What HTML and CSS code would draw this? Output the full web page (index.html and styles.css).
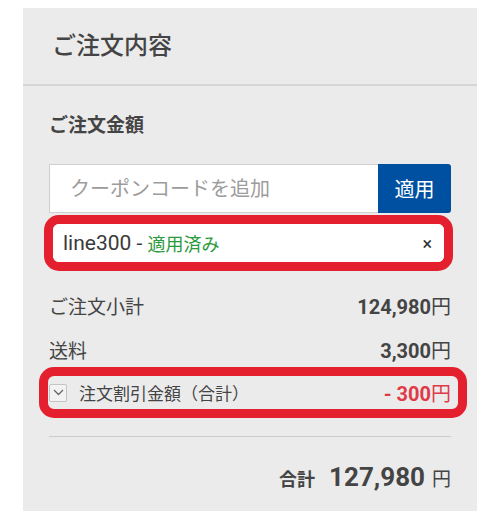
FILE: index.html
```html
<!DOCTYPE html>
<html lang="ja">
<head>
<meta charset="utf-8">
<link rel="stylesheet" href="styles.css">
</head>
<body>
<div class="panel">
  <div class="panel-head">ご注文内容</div>
  <div class="panel-body">
    <div class="section-title">ご注文金額</div>
    <div class="coupon-form">
      <input class="coupon-input" type="text" placeholder="クーポンコードを追加">
      <button class="coupon-btn" type="button">適用</button>
    </div>
    <div class="mark mark-chip">
      <div class="chip">
        <span class="chip-code">line300 - </span><span class="chip-status">適用済み</span>
        <span class="chip-close">×</span>
      </div>
    </div>
    <div class="rows">
      <div class="row">
        <span class="row-label">ご注文小計</span>
        <span class="amount">124,980<span class="yen">円</span></span>
      </div>
      <div class="row">
        <span class="row-label">送料</span>
        <span class="amount">3,300<span class="yen">円</span></span>
      </div>
      <div class="mark mark-row">
        <div class="row row-discount">
          <span class="row-left">
            <span class="check"><svg width="11" height="7" viewBox="0 0 11 7"><path d="M1 1l4.5 4.5L10 1" fill="none" stroke="#666" stroke-width="1.3"/></svg></span>
            <span class="discount-label">注文割引金額（合計）</span>
          </span>
          <span class="amount discount">- 300<span class="yen">円</span></span>
        </div>
      </div>
    </div>
    <div class="divider"></div>
    <div class="total">
      <span class="total-label">合計</span>
      <span class="total-num">127,980</span>
      <span class="total-yen">円</span>
    </div>
  </div>
</div>
</body>
</html>
```

FILE: styles.css
```css
html, body {
  margin: 0;
  padding: 0;
  background: #ffffff;
}
body {
  font-family: Roboto, "Noto Sans CJK JP", sans-serif;
  color: #444444;
}
.panel {
  margin: 8px 0 0 23px;
  width: 454px;
  height: 503px;
  background: #ebebeb;
}
.panel-head {
  height: 78px;
  box-sizing: border-box;
  padding: 21px 0 0 29px;
  font-size: 24px;
  font-weight: 500;
  line-height: 34px;
  border-bottom: 2px solid #d6d6d6;
}
.panel-body {
  padding: 0 26px;
}
.section-title {
  padding-top: 26px;
  font-size: 19px;
  font-weight: 700;
  line-height: 28px;
}
.coupon-form {
  display: flex;
  margin-top: 24px;
  height: 49px;
}
.coupon-input {
  flex: 1;
  min-width: 0;
  box-sizing: border-box;
  height: 49px;
  margin: 0;
  border: 1px solid #cfcfcf;
  border-right: none;
  background: #ffffff;
  padding: 0 0 0 20px;
  font-family: Roboto, "Noto Sans CJK JP", sans-serif;
  font-size: 20px;
  color: #444;
  outline: none;
}
.coupon-input::placeholder {
  color: #9c9c9c;
}
.coupon-btn {
  width: 73px;
  height: 49px;
  margin: 0;
  border: none;
  border-radius: 0 3px 3px 0;
  background: #0050a1;
  color: #ffffff;
  font-family: Roboto, "Noto Sans CJK JP", sans-serif;
  font-size: 20px;
  padding: 0;
}
.mark {
  border: 9px solid #e5202e;
  border-radius: 15px;
}
.mark-chip {
  margin: 2px -2px 0 -5px;
}
.chip {
  display: flex;
  align-items: center;
  height: 38px;
  background: #ffffff;
  border-radius: 6px;
  padding: 0 12px 0 10px;
}
.chip-code {
  font-size: 21px;
  color: #3a3a3a;
  white-space: pre;
}
.chip-status {
  font-size: 18px;
  color: #2a9a3c;
}
.chip-close {
  margin-left: auto;
  font-size: 18px;
  color: #333;
}
.rows {
  margin-top: 12px;
}
.row {
  display: flex;
  justify-content: space-between;
  align-items: center;
  height: 44px;
}
.row-label {
  font-size: 19px;
}
.amount {
  font-size: 20px;
  font-weight: 700;
}
.yen {
  font-weight: 400;
}
.mark-row {
  margin: -4px -16px -3px -10px;
}
.row-discount {
  height: 33px;
  padding: 0 7px 0 1px;
}
.row-left {
  display: flex;
  align-items: center;
}
.check {
  display: flex;
  align-items: center;
  justify-content: center;
  width: 16px;
  height: 16px;
  border: 1px solid #c4c4c4;
  border-radius: 2px;
  background: #f3f3f3;
}
.discount-label {
  margin-left: 12px;
  font-size: 17px;
}
.discount {
  color: #e03a48;
}
.divider {
  margin-top: 21px;
  height: 1px;
  background: #cccccc;
}
.total {
  display: flex;
  justify-content: flex-end;
  align-items: baseline;
  margin-top: 25px;
}
.total-label {
  font-size: 18px;
  font-weight: 700;
}
.total-num {
  margin-left: 14px;
  font-size: 26px;
  font-weight: 700;
}
.total-yen {
  margin-left: 7px;
  font-size: 19px;
}
```
